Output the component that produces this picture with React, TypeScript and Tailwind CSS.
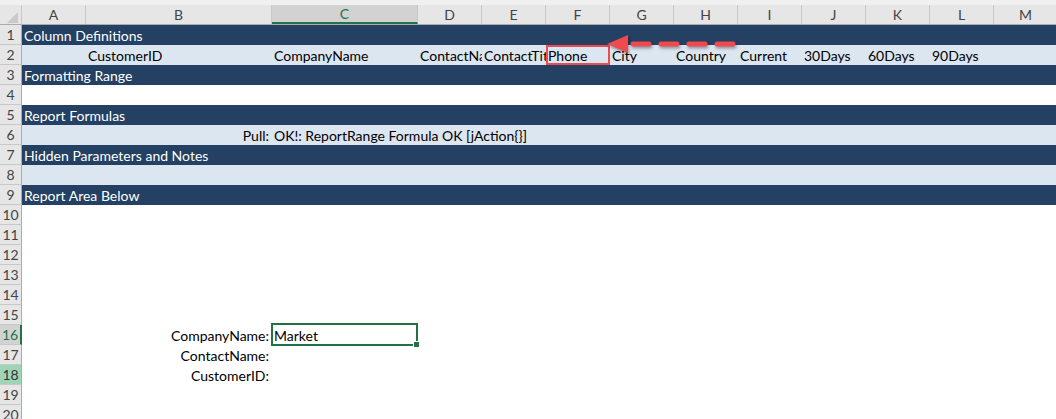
import React from 'react';

type Cell = { text: string; align?: 'left' | 'right'; clip?: boolean };
type Row = { n: number; fill: 'dark' | 'light' | 'white'; cells?: Record<string, Cell> };

const COLS = [
  { key: 'A', w: 'w-[64px]' },
  { key: 'B', w: 'w-[186px]' },
  { key: 'C', w: 'w-[146px]' },
  { key: 'D', w: 'w-[64px]' },
  { key: 'E', w: 'w-[64px]' },
  { key: 'F', w: 'w-[64px]' },
  { key: 'G', w: 'w-[64px]' },
  { key: 'H', w: 'w-[64px]' },
  { key: 'I', w: 'w-[64px]' },
  { key: 'J', w: 'w-[64px]' },
  { key: 'K', w: 'w-[64px]' },
  { key: 'L', w: 'w-[64px]' },
  { key: 'M', w: 'w-[64px]' },
];

const ROWS: Row[] = [
  { n: 1, fill: 'dark', cells: { A: { text: 'Column Definitions' } } },
  {
    n: 2,
    fill: 'light',
    cells: {
      B: { text: 'CustomerID' },
      C: { text: 'CompanyName' },
      D: { text: 'ContactName', clip: true },
      E: { text: 'ContactTitle', clip: true },
      F: { text: 'Phone' },
      G: { text: 'City' },
      H: { text: 'Country' },
      I: { text: 'Current' },
      J: { text: '30Days' },
      K: { text: '60Days' },
      L: { text: '90Days' },
    },
  },
  { n: 3, fill: 'dark', cells: { A: { text: 'Formatting Range' } } },
  { n: 4, fill: 'white' },
  { n: 5, fill: 'dark', cells: { A: { text: 'Report Formulas' } } },
  {
    n: 6,
    fill: 'light',
    cells: {
      B: { text: 'Pull:', align: 'right' },
      C: { text: 'OK!: ReportRange Formula OK [jAction{}]' },
    },
  },
  { n: 7, fill: 'dark', cells: { A: { text: 'Hidden Parameters and Notes' } } },
  { n: 8, fill: 'light' },
  { n: 9, fill: 'dark', cells: { A: { text: 'Report Area Below' } } },
  { n: 10, fill: 'white' },
  { n: 11, fill: 'white' },
  { n: 12, fill: 'white' },
  { n: 13, fill: 'white' },
  { n: 14, fill: 'white' },
  { n: 15, fill: 'white' },
  {
    n: 16,
    fill: 'white',
    cells: { B: { text: 'CompanyName:', align: 'right' }, C: { text: 'Market' } },
  },
  { n: 17, fill: 'white', cells: { B: { text: 'ContactName:', align: 'right' } } },
  { n: 18, fill: 'white', cells: { B: { text: 'CustomerID:', align: 'right' } } },
  { n: 19, fill: 'white' },
  { n: 20, fill: 'white' },
];

const fillClass = {
  dark: 'bg-[#244062] text-white',
  light: 'bg-[#dce6f1] text-black',
  white: 'bg-white text-black',
};

function RowHeader({ n }: { n: number }) {
  if (n === 16) {
    return (
      <div className="w-[22px] shrink-0 h-full flex items-center justify-center bg-[#d2d2d2] text-[#217346] border-b border-[#c8c8c8] border-r-2 border-r-[#217346] text-[14px]">
        {n}
      </div>
    );
  }
  if (n === 18) {
    return (
      <div className="w-[22px] shrink-0 h-full flex items-center justify-center bg-[#9fd5b7] text-[#333] border-b border-[#c8c8c8] border-r border-r-[#ababab] text-[14px]">
        {n}
      </div>
    );
  }
  return (
    <div className="w-[22px] shrink-0 h-full flex items-center justify-center bg-[#e6e6e6] text-[#444] border-b border-[#c8c8c8] border-r border-r-[#ababab] text-[14px]">
      {n}
    </div>
  );
}

function SheetRow({ row }: { row: Row }) {
  return (
    <div className={`flex h-[20px] ${fillClass[row.fill]}`}>
      <RowHeader n={row.n} />
      {COLS.map((c) => {
        const cell = row.cells?.[c.key];
        return (
          <div
            key={c.key}
            className={`${c.w} shrink-0 h-full relative ${cell?.clip ? 'overflow-hidden' : ''}`}
          >
            {cell && (
              <span
                className={`absolute top-[1px] whitespace-nowrap leading-[19px] text-[14px] ${
                  cell.align === 'right' ? 'right-[3px]' : 'left-[2px]'
                }`}
              >
                {cell.text}
              </span>
            )}
          </div>
        );
      })}
    </div>
  );
}

export default function App() {
  return (
    <div className="relative w-[1056px] h-[419px] overflow-hidden bg-white font-[Lato,sans-serif]">
      <div className="h-[5px] bg-[#f0f0f0]" />
      <div className="flex h-[20px] bg-[#e6e6e6] border-b border-[#ababab]">
        <div className="w-[22px] shrink-0 h-full border-r border-[#c8c8c8] relative">
          <svg width="22" height="20" className="absolute left-0 top-0">
            <polygon points="18,7 18,18 7,18" fill="#c9c9c9" />
          </svg>
        </div>
        {COLS.map((c) =>
          c.key === 'C' ? (
            <div
              key={c.key}
              className={`${c.w} shrink-0 h-full flex items-center justify-center bg-[#d2d2d2] text-[#217346] text-[14px] border-r border-[#c8c8c8] border-b-2 border-b-[#217346]`}
            >
              {c.key}
            </div>
          ) : (
            <div
              key={c.key}
              className={`${c.w} shrink-0 h-full flex items-center justify-center text-[#444] text-[14px] border-r border-[#c8c8c8]`}
            >
              {c.key}
            </div>
          )
        )}
      </div>
      {ROWS.map((r) => (
        <SheetRow key={r.n} row={r} />
      ))}

      {/* active cell C16 */}
      <div className="absolute left-[271px] top-[323px] w-[147px] h-[23px] border-2 border-[#217346]" />
      <div className="absolute left-[413px] top-[341px] w-[7px] h-[7px] bg-[#217346] border border-white" />

      {/* red annotation */}
      <div className="absolute left-[546px] top-[45px] w-[64px] h-[20px] border-2 border-[#ee4b4f]" />
      <svg
        className="absolute left-0 top-0 pointer-events-none"
        width="1056"
        height="419"
        style={{ filter: 'drop-shadow(1px 2px 1.5px rgba(0,0,0,0.35))' }}
      >
        <line
          x1="633"
          y1="44"
          x2="738"
          y2="44"
          stroke="#f04a4f"
          strokeWidth="5"
          strokeDasharray="16 12"
          strokeLinecap="round"
        />
        <polygon points="607,44 628,35 628,53" fill="#f04a4f" />
      </svg>
    </div>
  );
}
